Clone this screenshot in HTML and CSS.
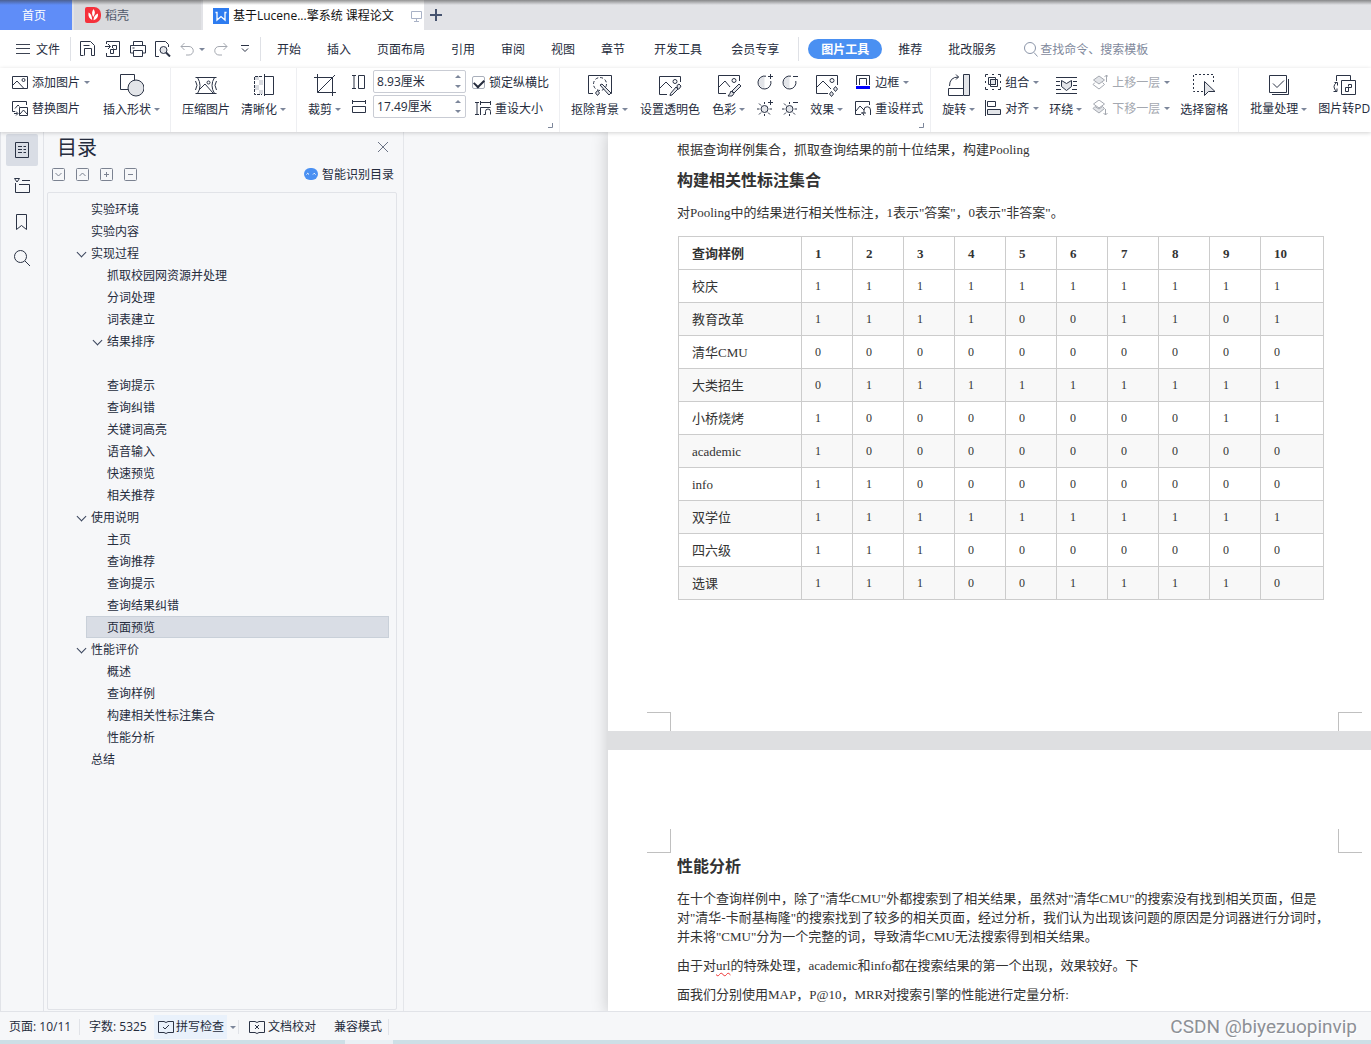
FILE: index.html
```html
<!DOCTYPE html>
<html lang="zh-CN">
<head>
<meta charset="utf-8">
<meta name="viewport" content="width=device-width, initial-scale=1">
<title>基于Lucene...擎系统 课程论文</title>
<link rel="stylesheet" href="styles.css">
</head>
<body>
<div class="app">

<header class="tabbar">
  <button class="tab tab-home" type="button">首页</button>
  <button class="tab tab-docer" type="button">
    <svg width="16" height="16" viewBox="0 0 16 16"><path d="M2 0h7a7 7 0 0 1 7 7v2a7 7 0 0 1-7 7H2a2 2 0 0 1-2-2V2a2 2 0 0 1 2-2z" fill="#f5313b"/><path d="M8.500 2c2 2.500 1.800 5-.3 8C6.500 7 6.800 4.500 8.500 2zM3.500 5.500c2.300 1 3.500 3.300 3.700 7.500C4.300 11.500 3 9.500 3.500 5.500zM13 6.500c.3 3.500-1 5.700-4.500 6.700.2-3.500 1.500-5.500 4.500-6.700z" fill="#fff"/></svg>
    稻壳
  </button>
  <button class="tab tab-doc" type="button">
    <svg width="16" height="16" viewBox="0 0 16 16"><path d="M0 0h16v16H0z" fill="#2e7cf0"/><path d="M2.500 4.500h1.500v7.500L8 8.500l4 3.500V4.500h1.500" fill="none" stroke="#fff" stroke-width="1.300"/></svg>
    <span class="tab-name">基于Lucene...擎系统 课程论文</span>
    <svg width="11" height="12" viewBox="0 0 11 12" fill="none" stroke="#a9b2c6"><path d="M.5 1.500h10v7H.5zM5.500 8.500v3M3 11.500h5"/></svg>
  </button>
  <button class="tab-add" type="button" aria-label="新建"><svg width="12" height="12" viewBox="0 0 12 12"><path d="M6 0v12M0 6h12" stroke="#46536f" stroke-width="2"/></svg></button>
</header>

<nav class="menubar">
  <button class="file-menu" type="button"><svg width="14" height="10" viewBox="0 0 14 10"><path d="M0 .5h14M0 4.500h14M0 9.500h14" stroke="#3c4352"/></svg>文件</button>
  <div class="quick">
    <button type="button" aria-label="保存"><svg class="ic" width="16" height="16" viewBox="0 0 16 16"><path d="M3.500 14.500h-3V.5h10l4 4v10h-3M4.500 14.500v-7h7v7M3.500 4.500h6"/></svg></button>
    <button type="button" aria-label="输出为PDF"><svg class="ic" width="16" height="16" viewBox="0 0 16 16"><path d="M1.500 3V.5h13v15h-13V12M0 5.500h5M3 3l2.500 2.500L3 8M7.500 7V4.500h4v4h-6v4h3v-5"/></svg></button>
    <button type="button" aria-label="打印"><svg class="ic" width="16" height="16" viewBox="0 0 16 16"><path d="M3.500 4V.5h9V4M3.500 12h-3V4.500h15V12h-3M3.500 9.500h9v6h-9zM2.500 7h2"/></svg></button>
    <button type="button" aria-label="打印预览"><svg class="ic" width="16" height="16" viewBox="0 0 16 16"><path d="M4 15.500H.5V.5h10l3 3V6"/><circle class="shade" cx="8.500" cy="9" r="3.500"/><path d="M11 11.500l4 4" stroke-width="2"/></svg></button>
    <button type="button" aria-label="撤销"><svg class="ic faint" width="14" height="14" viewBox="0 0 14 14"><path d="M4.500 1L1 4.500 4.500 8M1 4.500h8a4 4 0 0 1 0 8.500H6"/></svg></button>
    <button type="button" class="undo-more" aria-label="更多撤销"><i class="caret"></i></button>
    <button type="button" aria-label="重做"><svg class="ic faint" width="14" height="14" viewBox="0 0 14 14"><path d="M9.500 1L13 4.500 9.500 8M13 4.500H5a4 4 0 0 0 0 8.500h3"/></svg></button>
    <button type="button" class="quick-more" aria-label="自定义"><svg class="ic" width="8" height="8" viewBox="0 0 8 8"><path d="M0 .5h8M1 3.500l3 3 3-3"/></svg></button>
  </div>
  <div class="menu-tabs">
    <button type="button">开始</button><button type="button">插入</button><button type="button">页面布局</button><button type="button">引用</button><button type="button">审阅</button><button type="button">视图</button><button type="button">章节</button><button type="button" class="far">开发工具</button><button type="button" class="far">会员专享</button>
  </div>
  <div class="context-tabs">
    <button type="button" class="pill">图片工具</button><button type="button">推荐</button><button type="button" class="review">批改服务</button>
  </div>
  <label class="search"><svg width="14" height="15" viewBox="0 0 14 15" fill="none" stroke="#8b95a8"><circle cx="6" cy="6" r="5.500"/><path d="M10 10.500l3.500 4"/></svg><input type="text" placeholder="查找命令、搜索模板" aria-label="查找命令"></label>
</nav>

<section class="ribbon">
  <div class="group g-insert">
    <div class="stack">
      <button type="button" class="small"><svg class="ic" width="16" height="14" viewBox="0 0 16 14"><path d="M.5 1.500h15v12H.5zM1 10l4-4 7 7.500"/><circle cx="11.500" cy="5" r="1.500"/></svg>添加图片<i class="caret"></i></button>
      <button type="button" class="small"><svg class="ic" width="16" height="15" viewBox="0 0 16 15"><path d="M3 10.500H.5V.5h14V4M3 7.500L6 4l1.500 1.500M7.500 14.500v-8h8v8zM8 13l3.500-4 3.500 4M2 12.500h3.500M4 10.500l2 2-2 2"/></svg>替换图片</button>
    </div>
    <button type="button" class="big"><svg class="ic" width="24" height="24" viewBox="0 0 24 24"><path d="M.5 1.500h14v15H.5z"/><circle class="shade" cx="16" cy="15" r="8"/></svg><span>插入形状<i class="caret"></i></span></button>
  </div>

  <div class="group">
    <button type="button" class="big"><svg class="ic" width="24" height="24" viewBox="0 0 24 24"><path d="M1.500 4.500h21M1.500 20.500h21M1.500 8q3 4 0 9M22.500 8q-3 4 0 9M3.500 4.500q5 8 0 16M20.500 4.500q-5 8 0 16M5 17l6-6 8 9"/><circle cx="14.500" cy="9.500" r="1.500"/></svg><span>压缩图片</span></button>
    <button type="button" class="big"><svg class="ic" width="24" height="24" viewBox="0 0 24 24"><path fill="#d9dbe0" stroke="none" d="M3 3h4v4H3zM7 7h4v5H7zM3 12h4v5H3zM7 17h4v4H7z"/><path d="M10 3.500H2.500v18H10" stroke-dasharray="3 1"/><path d="M12.500 1v22M12.500 3.500h9v18h-9"/></svg><span>清晰化<i class="caret"></i></span></button>
  </div>

  <div class="group g-size">
    <button type="button" class="big"><svg class="ic" width="24" height="24" viewBox="0 0 24 24"><path d="M4.500 1v18.500H23M1 4.500h18.500V23M4.500 19.500L22 2"/></svg><span>裁剪<i class="caret"></i></span></button>
    <div class="sizes">
      <div class="size-row">
        <svg class="ic" width="14" height="16" viewBox="0 0 14 16"><path d="M0 1.500h4M0 14.500h4M2 1.500v13M6.500 1.500h6v13h-6z"/></svg>
        <div class="spin"><input type="text" value="8.93厘米" aria-label="高度"><span><button type="button" aria-label="增加高度"><i class="up"></i></button><button type="button" aria-label="减少高度"><i class="down"></i></button></span></div>
      </div>
      <div class="size-row">
        <svg class="ic" width="14" height="16" viewBox="0 0 14 16"><path d="M.5 1v4M13.500 1v4M.5 2.500h13M.5 7.500h13v6H.5z"/></svg>
        <div class="spin"><input type="text" value="17.49厘米" aria-label="宽度"><span><button type="button" aria-label="增加宽度"><i class="up"></i></button><button type="button" aria-label="减少宽度"><i class="down"></i></button></span></div>
      </div>
    </div>
    <div class="stack">
      <label class="small lock"><input type="checkbox" checked>锁定纵横比</label>
      <button type="button" class="small reset-size"><svg class="ic" width="16" height="16" viewBox="0 0 16 16"><path d="M0 2.500h4M0 14.500h4M2 2.500v12M5.500 1v4M15.500 1v4M5.500 2.500h10M5.500 15V7.500h10M8.500 14.500h2v-3a2 2 0 0 1 5 0v3"/></svg>重设大小</button>
    </div>
    <svg class="launcher" width="5" height="5" viewBox="0 0 5 5"><path d="M0 4.500h4.500V0"/></svg>
  </div>

  <div class="group g-style">
    <button type="button" class="big"><svg class="ic" width="24" height="24" viewBox="0 0 24 24"><path d="M5 20.500H.5v-18h23v18H22"/><circle cx="12" cy="11" r="6.500" stroke-dasharray="3 2"/><path class="shade" d="M12 12l2-1 9 9-2 2zM9.500 17.500l2 2.500-2 2.500L7.500 20z"/></svg><span>抠除背景<i class="caret"></i></span></button>
    <button type="button" class="big"><svg class="ic" width="24" height="24" viewBox="0 0 24 24"><path d="M9 21.500H1.500v-18h21V9M2 15l6-6 6 6"/><circle cx="17" cy="8.500" r="2"/><path class="shade" d="M19 12.500l2-1.500 2 2-1.500 2.500-2 1zM18 14l2 2-6 6-2 .5.500-2z"/></svg><span>设置透明色</span></button>
    <button type="button" class="big"><svg class="ic" width="24" height="24" viewBox="0 0 24 24"><path d="M9 20.500H1.500v-18h21V8M2 14l6-6 5 6"/><circle cx="17" cy="7.500" r="2"/><path class="shade" d="M22 11l2 2-7 7-2-2zM14 18l3 2.500-2 2.500h-4q2-2 3-5z"/></svg><span>色彩<i class="caret"></i></span></button>
    <div class="tones">
      <button type="button" aria-label="增加对比度"><svg class="ic" width="16" height="16" viewBox="0 0 16 16"><path fill="#e3e5e9" stroke="none" d="M7.500 2v12a6 6 0 0 1 0-12z"/><path d="M9 2.200a6.500 6.500 0 1 0 4.800 4.800M13.500 0v5M11 2.500h5"/></svg></button>
      <button type="button" aria-label="降低对比度"><svg class="ic" width="16" height="16" viewBox="0 0 16 16"><path fill="#e3e5e9" stroke="none" d="M7.500 2v12a6 6 0 0 1 0-12z"/><path d="M9 2.200a6.500 6.500 0 1 0 4.800 4.800M11 2.500h5"/></svg></button>
      <button type="button" aria-label="增加亮度"><svg class="ic" width="16" height="16" viewBox="0 0 16 16"><circle class="shade" cx="7.500" cy="9" r="3.500"/><path d="M7.500 2v2M7.500 14v2M0 9h2.500M12.500 9H15M2 3.500l2 2M11 12.500l2 2M4 12.500l-2 2M13.500 0v5M11 2.500h5"/></svg></button>
      <button type="button" aria-label="降低亮度"><svg class="ic" width="16" height="16" viewBox="0 0 16 16"><circle class="shade" cx="7.500" cy="9" r="3.500"/><path d="M7.500 2v2M7.500 14v2M0 9h2.500M12.500 9H15M2 3.500l2 2M11 12.500l2 2M4 12.500l-2 2M11 2.500h5"/></svg></button>
    </div>
    <button type="button" class="big"><svg class="ic" width="24" height="24" viewBox="0 0 24 24"><path d="M13 20.500H1.500v-18h21V12M2 14l6-6 8 8"/><circle cx="17" cy="7.500" r="2"/><path class="shade" d="M20.500 13.500l2 2.500-2 2.500-2-2.500zM16.500 18.500l2 2.500-2 2.500-2-2.500z"/></svg><span>效果<i class="caret"></i></span></button>
    <div class="stack">
      <button type="button" class="small"><svg class="ic" width="16" height="16" viewBox="0 0 16 16"><path d="M1.500 11V1.500h13V11M4.500 11V4.500h7V11"/><path d="M1 13.500h14" stroke="#00f" stroke-width="3"/></svg>边框<i class="caret"></i></button>
      <button type="button" class="small"><svg class="ic" width="16" height="16" viewBox="0 0 16 16"><path d="M6 14.500H.5v-13h14V5M1 11l4-5 4 4M9 15.500l-1.500-3M6 13h5M9 13V10a3 3 0 0 1 6.500 0v5"/></svg>重设样式</button>
    </div>
    <svg class="launcher" width="5" height="5" viewBox="0 0 5 5"><path d="M0 4.500h4.500V0"/></svg>
  </div>

  <div class="group g-arrange">
    <button type="button" class="big"><svg class="ic" width="24" height="24" viewBox="0 0 24 24"><path class="shade" d="M16.500 1.500h6v21h-6z"/><path d="M16 22.500H1.500v-7H16M2.500 13q0-9 9-9M9 1.500L11.500 4 9 6.500"/></svg><span>旋转<i class="caret"></i></span></button>
    <div class="stack">
      <button type="button" class="small"><svg class="ic" width="16" height="16" viewBox="0 0 16 16"><path d="M3.500 3.500h7v7h-7zM5.500 5.500h7v7h-7z"/><path class="shade" d="M5.500 5.500h5v5h-5z"/><path d="M.5 3V.5H3M7 .5h2M13 .5h2.500V3M15.500 7v2M15.500 13v2.500H13M9 15.500H7M3 15.500H.5V13M.5 9V7"/></svg>组合<i class="caret"></i></button>
      <button type="button" class="small"><svg class="ic" width="16" height="16" viewBox="0 0 16 16"><path d="M.5 0v16M2.500 1.500h8v5h-8z"/><path class="shade" d="M2.500 9.500h13v5h-13z"/></svg>对齐<i class="caret"></i></button>
    </div>
    <button type="button" class="big"><svg class="ic" width="24" height="24" viewBox="0 0 24 24"><path d="M2 4.500h21M2 8.500h4M19 8.500h4M2 12.500h4M19 12.500h4M2 16.500h5M18 16.500h5M2 20.500h21"/><path class="shade" d="M7.500 7.500l5 3 5-3v6l-5 4-5-4z"/></svg><span>环绕<i class="caret"></i></span></button>
    <div class="stack">
      <button type="button" class="small off" disabled><svg class="ic faint" width="16" height="16" viewBox="0 0 16 16"><path class="shade" d="M7 2l5.500 4L7 10 1.500 6z"/><path d="M3 8.500l-2 2L7 15l5.500-4.500-2-2M14.500 8V1M12.500 3l2-2 2 2"/></svg>上移一层<i class="caret"></i></button>
      <button type="button" class="small off" disabled><svg class="ic faint" width="16" height="16" viewBox="0 0 16 16"><path d="M7 0l5.500 4L7 8 1.500 4z"/><path class="shade" d="M3 6.500l-2 2L7 13l5.500-4.500-2-2L7 9z"/><path d="M13.500 9v6M11.500 13l2 2 2-2"/></svg>下移一层<i class="caret"></i></button>
    </div>
    <button type="button" class="big"><svg class="ic" width="24" height="24" viewBox="0 0 24 24"><path d="M11 18.500H1.500v-17h20V10" stroke-dasharray="2 2"/><path class="shade" d="M12.500 8.500v14l4-4h6.500z"/></svg><span>选择窗格</span></button>
  </div>

  <div class="group g-tools">
    <button type="button" class="big"><svg class="ic" width="24" height="24" viewBox="0 0 24 24"><path d="M2.500 2.500h17v17h-17zM6 10.500l4 4 7-7M5 21.500h16.500V6"/></svg><span>批量处理<i class="caret"></i></span></button>
    <button type="button" class="big"><svg class="ic" width="24" height="24" viewBox="0 0 24 24"><path d="M4.500 8V2.500h14V7M9.500 7.500h14v14h-14z"/><path d="M16.500 13.500v-2h3v3h-6v4h3v-4M4.500 9.500q-5 4 0 9M1.500 18.500h3.500v-3M2.500 9.500h3v3"/></svg><span>图片转PD</span></button>
  </div>
</section>

<main class="work">
  <aside class="rail">
    <button type="button" class="on" aria-label="目录"><svg class="ic" width="16" height="18" viewBox="0 0 16 18"><path d="M1.500 1.500h13v15h-13zM4 5.500h4M9.500 5.500H12M4 8.500h4M9.500 8.500H12M4 11.500h4M9.500 11.500H12"/></svg></button>
    <button type="button" aria-label="章节"><svg class="ic" width="16" height="18" viewBox="0 0 16 18"><path d="M.5 1.500h5L3 5zM8 3.500h8M1.500 6v9.500h14v-8H5"/></svg></button>
    <button type="button" aria-label="书签"><svg class="ic" width="16" height="18" viewBox="0 0 16 18"><path d="M2.500 1.500h10v15l-5-4-5 4z"/></svg></button>
    <button type="button" aria-label="查找"><svg class="ic" width="16" height="18" viewBox="0 0 16 18"><circle cx="6.500" cy="7.500" r="6"/><path d="M11 12l5 5"/></svg></button>
  </aside>

  <aside class="outline">
    <div class="outline-head"><h2>目录</h2><button type="button" aria-label="关闭"><svg width="10" height="10" viewBox="0 0 10 10"><path d="M0 0l10 10M10 0L0 10" stroke="#6b7385"/></svg></button></div>
    <div class="outline-tools">
      <button type="button" aria-label="展开"><svg width="13" height="13" viewBox="0 0 13 13"><rect x=".5" y=".5" width="12" height="12" rx="1"/><path d="M3.500 5l3 3 3-3"/></svg></button>
      <button type="button" aria-label="收起"><svg width="13" height="13" viewBox="0 0 13 13"><rect x=".5" y=".5" width="12" height="12" rx="1"/><path d="M3.500 8l3-3 3 3"/></svg></button>
      <button type="button" aria-label="增加"><svg width="13" height="13" viewBox="0 0 13 13"><rect x=".5" y=".5" width="12" height="12" rx="1"/><path d="M4 6.500h5M6.500 4v5"/></svg></button>
      <button type="button" aria-label="减少"><svg width="13" height="13" viewBox="0 0 13 13"><rect x=".5" y=".5" width="12" height="12" rx="1"/><path d="M4 6.500h5"/></svg></button>
      <button type="button" class="smart"><svg width="14" height="12" viewBox="0 0 14 12"><rect width="14" height="12" rx="6" fill="#4a90f2" stroke="none"/><path d="M2.500 6.500q1.200-2.500 2.500 0M9 6.500q1.200-2.500 2.500 0" stroke="#fff"/></svg>智能识别目录</button>
    </div>
    <ul class="tree">
      <li><i></i>实验环境</li>
      <li><i></i>实验内容</li>
      <li><i class="open"></i>实现过程</li>
      <li class="sub"><i></i>抓取校园网资源并处理</li>
      <li class="sub"><i></i>分词处理</li>
      <li class="sub"><i></i>词表建立</li>
      <li class="sub"><i class="open"></i>结果排序</li>
      <li class="sub"></li>
      <li class="sub"><i></i>查询提示</li>
      <li class="sub"><i></i>查询纠错</li>
      <li class="sub"><i></i>关键词高亮</li>
      <li class="sub"><i></i>语音输入</li>
      <li class="sub"><i></i>快速预览</li>
      <li class="sub"><i></i>相关推荐</li>
      <li><i class="open"></i>使用说明</li>
      <li class="sub"><i></i>主页</li>
      <li class="sub"><i></i>查询推荐</li>
      <li class="sub"><i></i>查询提示</li>
      <li class="sub"><i></i>查询结果纠错</li>
      <li class="sub current"><i></i>页面预览</li>
      <li><i class="open"></i>性能评价</li>
      <li class="sub"><i></i>概述</li>
      <li class="sub"><i></i>查询样例</li>
      <li class="sub"><i></i>构建相关性标注集合</li>
      <li class="sub"><i></i>性能分析</li>
      <li><i></i>总结</li>
    </ul>
  </aside>

  <div class="canvas">
    <div class="sheets">
      <article class="sheet">
        <div class="copy">
          <p>根据查询样例集合，抓取查询结果的前十位结果，构建Pooling</p>
          <h3>构建相关性标注集合</h3>
          <p>对Pooling中的结果进行相关性标注，1表示"答案"，0表示"非答案"。</p>
          <table class="marks">
            <colgroup><col class="c-name"><col class="c-n" span="9"><col></colgroup>
            <thead><tr><th>查询样例</th><th>1</th><th>2</th><th>3</th><th>4</th><th>5</th><th>6</th><th>7</th><th>8</th><th>9</th><th>10</th></tr></thead>
            <tbody>
            <tr><th>校庆</th><td>1</td><td>1</td><td>1</td><td>1</td><td>1</td><td>1</td><td>1</td><td>1</td><td>1</td><td>1</td></tr>
            <tr><th>教育改革</th><td>1</td><td>1</td><td>1</td><td>1</td><td>0</td><td>0</td><td>1</td><td>1</td><td>0</td><td>1</td></tr>
            <tr><th>清华CMU</th><td>0</td><td>0</td><td>0</td><td>0</td><td>0</td><td>0</td><td>0</td><td>0</td><td>0</td><td>0</td></tr>
            <tr><th>大类招生</th><td>0</td><td>1</td><td>1</td><td>1</td><td>1</td><td>1</td><td>1</td><td>1</td><td>1</td><td>1</td></tr>
            <tr><th>小桥烧烤</th><td>1</td><td>0</td><td>0</td><td>0</td><td>0</td><td>0</td><td>0</td><td>0</td><td>1</td><td>1</td></tr>
            <tr><th>academic</th><td>1</td><td>0</td><td>0</td><td>0</td><td>0</td><td>0</td><td>0</td><td>0</td><td>0</td><td>0</td></tr>
            <tr><th>info</th><td>1</td><td>1</td><td>0</td><td>0</td><td>0</td><td>0</td><td>0</td><td>0</td><td>0</td><td>0</td></tr>
            <tr><th>双学位</th><td>1</td><td>1</td><td>1</td><td>1</td><td>1</td><td>1</td><td>1</td><td>1</td><td>1</td><td>1</td></tr>
            <tr><th>四六级</th><td>1</td><td>1</td><td>1</td><td>0</td><td>0</td><td>0</td><td>0</td><td>0</td><td>0</td><td>0</td></tr>
            <tr><th>选课</th><td>1</td><td>1</td><td>1</td><td>0</td><td>0</td><td>1</td><td>1</td><td>1</td><td>1</td><td>0</td></tr>
            </tbody>
          </table>
        </div>
        <div class="crop crop-bottom"><i></i><i></i></div>
      </article>
      <article class="sheet">
        <div class="crop crop-top"><i></i><i></i></div>
        <div class="copy copy-next">
          <h3>性能分析</h3>
          <p>在十个查询样例中，除了"清华CMU"外都搜索到了相关结果，虽然对"清华CMU"的搜索没有找到相关页面，但是<br>对"清华-卡耐基梅隆"的搜索找到了较多的相关页面，经过分析，我们认为出现该问题的原因是分词器进行分词时，<br>并未将"CMU"分为一个完整的词，导致清华CMU无法搜索得到相关结果。</p>
          <p>由于对<span class="typo">url</span>的特殊处理，academic和info都在搜索结果的第一个出现，效果较好。下</p>
          <p>面我们分别使用MAP，P@10，MRR对搜索引擎的性能进行定量分析:</p>
        </div>
      </article>
    </div>
  </div>
</main>

<footer class="status">
  <span class="cell">页面: 10/11</span>
  <span class="words">字数: 5325</span>
  <button type="button" class="spell"><svg class="ic" width="16" height="14" viewBox="0 0 16 14"><path d="M6 1.500H.5v11H6l2 1 2-1h5.500v-11H10l-2 1zM5 7l2 2 4-4"/></svg>拼写检查</button>
  <button type="button" class="spell-more" aria-label="拼写选项"><i class="caret"></i></button>
  <button type="button" class="proof"><svg class="ic" width="16" height="14" viewBox="0 0 16 14"><path d="M6 1.500H.5v11H6l2 1 2-1h5.500v-11H10l-2 1zM6 5l4 4M10 5L6 9"/></svg>文档校对</button>
  <span class="compat">兼容模式</span>
  <span class="credit">CSDN @biyezuopinvip</span>
</footer>
<div class="desktop-edge"><i></i></div>
</div>
</body>
</html>
```

FILE: styles.css
```css
* { box-sizing: border-box; }
body {
  margin: 0;
  font: 12px/16px "Noto Sans CJK SC", sans-serif;
  color: #252c3d;
  background: #fff;
}
button, input {
  font: inherit;
  color: inherit;
  border: 0;
  margin: 0;
  padding: 0;
  background: none;
  white-space: nowrap;
}
svg { display: block; flex: none; }
.tab-name, .spin input, .status, .g-tools { font-family: "Open Sans", "Noto Sans CJK SC", sans-serif; }
.ic { fill: none; stroke: #2b3345; }
.ic .shade { fill: #e3e5e9; }
.ic.faint { stroke: #a4a8b0; }
.caret {
  flex: none;
  border: 3px solid transparent;
  border-top-color: #7c869a;
  border-bottom: 0;
}
.app { display: flex; flex-direction: column; height: 100vh; overflow: hidden; }

/* document tabs */
.tabbar { position: relative; display: flex; flex: none; height: 30px; background: #e2e3e7; }
.tabbar::after {
  content: "";
  position: absolute;
  inset: 0 0 auto;
  height: 5px;
  background: linear-gradient(rgba(60, 60, 60, .55), rgba(60, 60, 60, 0));
  pointer-events: none;
}
.tab { display: flex; align-items: center; }
.tab-home { width: 72px; justify-content: center; background: #5f8df8; color: #fff; margin-right: 2px; padding-right: 4px; }
.tab-docer { width: 127px; gap: 4px; padding-left: 11px; background: #d9dadd; color: #50586a; margin-right: 2px; }
.tab-doc { width: 221px; gap: 4px; padding: 1px 2px 0 10px; background: #fff; color: #111; }
.tab-name { flex: 1; text-align: left; }
.tab-add { display: flex; align-items: center; padding: 0 6px; }

/* menu row */
.menubar { display: flex; flex: none; align-items: center; height: 38px; }
.file-menu { display: flex; align-items: center; gap: 6px; padding-left: 16px; width: 70px; }
.quick {
  display: flex;
  align-items: center;
  gap: 9px;
  height: 24px;
  width: 191px;
  padding-left: 9px;
  border: solid #dfe1e6;
  border-width: 0 1px;
}
.undo-more { display: flex; margin-left: -4px; }
.quick-more { margin-left: 4px; }
.menu-tabs { display: flex; gap: 26px; padding: 0 19px 0 16px; }
.menu-tabs .far { margin-left: 3px; }
.context-tabs { display: flex; align-items: center; gap: 16px; height: 24px; padding-left: 9px; border-left: 1px solid #dfe1e6; }
.pill { height: 20px; width: 74px; border-radius: 10px; background: #4a90f2; color: #fff; font-weight: 700; }
.review { margin-left: 10px; }
.search { display: flex; align-items: center; gap: 2px; margin-left: 28px; }
.search input { width: 140px; outline: 0; }
.search input::placeholder { color: #7f899c; opacity: 1; }

/* ribbon */
.ribbon {
  position: relative;
  z-index: 1;
  display: flex;
  flex: none;
  height: 64px;
  background: #fff;
  box-shadow: 0 1px 4px rgba(0, 0, 0, .18);
}
.group {
  position: relative;
  display: flex;
  flex: none;
  gap: 11px;
  padding: 0 10px 0 11px;
  border-right: 1px solid #eeeff2;
}
.g-insert { gap: 13px; padding-left: 12px; }
.g-style { gap: 12px; padding-right: 7px; }
.g-arrange { gap: 10px; }
.g-tools { border: 0; }
.big { display: flex; flex-direction: column; align-items: center; gap: 4px; padding-top: 5px; }
.big span { display: flex; align-items: center; gap: 3px; }
.stack { display: flex; flex-direction: column; gap: 10px; padding-top: 6px; }
.small { display: flex; align-items: center; gap: 4px; height: 16px; white-space: nowrap; }
.off { color: #a4a8b0; }
.sizes { display: flex; flex-direction: column; gap: 2px; padding-top: 2px; }
.size-row { display: flex; align-items: center; gap: 7px; }
.spin { display: flex; width: 93px; height: 23px; border: 1px solid #c9ccd4; border-radius: 2px; }
.spin input { flex: 1; min-width: 0; padding-left: 3px; outline: 0; }
.spin span { display: flex; flex-direction: column; justify-content: space-evenly; width: 14px; }
.spin button { display: flex; height: 9px; align-items: center; justify-content: center; }
.up, .down { border: 3px solid transparent; }
.up { border-top: 0; border-bottom-color: #7c869a; }
.down { border-bottom: 0; border-top-color: #7c869a; }
.g-size .stack { margin-left: -5px; }
.lock input {
  appearance: none;
  display: flex;
  justify-content: center;
  width: 13px;
  height: 13px;
  padding-top: 2px;
  border: 1px solid #a9afbb;
  border-radius: 2px;
}
.lock input:checked::after {
  content: "";
  width: 8px;
  height: 5px;
  border: solid #252c3d;
  border-width: 0 0 2px 2px;
  transform: rotate(-45deg);
}
.reset-size { padding-left: 3px; }
.launcher { position: absolute; right: 6px; bottom: 4px; fill: none; stroke: #7c869a; }
.tones { display: grid; grid-template-columns: 16px 16px; gap: 10px 9px; align-content: start; padding-top: 6px; }

/* work area */
.work { display: flex; flex: 1; min-height: 0; background: #f6f7f9; }
.rail {
  display: flex;
  flex: none;
  flex-direction: column;
  gap: 4px;
  width: 44px;
  padding: 2px 5px;
  border: solid #e1e3e8;
  border-width: 0 1px;
}
.rail button { display: flex; align-items: center; justify-content: center; width: 32px; height: 32px; border-radius: 2px; }
.rail .on { background: #d9dde5; }
.outline { display: flex; flex: none; flex-direction: column; width: 360px; padding: 0 6px 1px 3px; border-right: 1px solid #e4e6ea; }
.outline-head { display: flex; align-items: center; justify-content: space-between; height: 30px; padding: 0 9px 0 10px; }
.outline-head h2 { margin: 0; font-size: 20px; line-height: 28px; font-weight: 400; }
.outline-tools { display: flex; align-items: center; gap: 11px; height: 24px; padding: 0 3px 0 5px; margin-bottom: 6px; fill: none; stroke: #7b8291; }
.smart { display: flex; align-items: center; gap: 4px; margin-left: auto; }
.tree {
  flex: 1;
  min-height: 0;
  margin: 0;
  padding: 5px 7px 0 28px;
  list-style: none;
  border: 1px solid #e1e3e8;
  border-radius: 2px;
}
.tree li { display: flex; align-items: center; gap: 5px; height: 22px; }
.tree i { display: flex; justify-content: center; width: 10px; }
.tree .open::before {
  content: "";
  width: 6px;
  height: 6px;
  margin-bottom: 2px;
  border: solid #39445c;
  border-width: 0 1px 1px 0;
  transform: rotate(45deg);
}
.tree .sub { margin-left: 10px; padding-left: 6px; }
.tree .current { background: #d9dde5; box-shadow: inset 0 0 0 1px #c9d0d9; }

/* pages */
.canvas { flex: 1; min-width: 0; padding-left: 204px; overflow: hidden; }
.sheets { display: flex; flex-direction: column; gap: 19px; background: #dedfe1; box-shadow: 0 0 16px rgba(0, 0, 0, .2); }
.sheet {
  background: #fff;
  color: #333;
  font: 13px/19px "Liberation Serif", "Noto Sans CJK SC", serif;
}
.copy { padding: 8px 47px 0 69px; }
.copy-next { padding-top: 2px; }
.copy p { margin: 0 0 10px; white-space: nowrap; }
.copy h3 { margin: 0 0 10px; font-size: 16px; line-height: 24px; }
.marks { width: calc(100% - 1px); margin: 14px 0 0 1px; border-collapse: collapse; table-layout: fixed; }
.c-name { width: 123px; }
.c-n { width: 51px; }
.marks tr { height: 33px; }
.marks th, .marks td { padding: 0 0 0 13px; border: 1px solid #ccc; text-align: left; }
.marks tbody th { font-weight: 400; }
.marks td { font-size: 12px; }
.marks tbody tr:nth-child(2n) { background: #f8f8f8; }
.typo { text-decoration: underline wavy #e33 1px; text-underline-offset: 2px; }
.crop { display: flex; justify-content: space-between; padding: 0 9px 0 39px; }
.crop i { width: 24px; border: 0 solid #c0c0c0; }
.crop i:first-child { border-right-width: 1px; }
.crop i:last-child { border-left-width: 1px; }
.crop-bottom { padding-top: 112px; }
.crop-bottom i { height: 19px; border-top-width: 1px; }
.crop-top { padding-top: 79px; }
.crop-top i { height: 24px; border-bottom-width: 1px; }

/* status bar */
.status { display: flex; flex: none; align-items: center; height: 29px; padding: 2px 14px 0 9px; background: #f6f7f9; border-top: 1px solid #e1e3e8; white-space: nowrap; }
.cell { width: 71px; border-right: 1px solid #e1e3e8; }
.words { width: 65px; margin-left: 9px; }
.spell, .proof { display: flex; align-items: center; gap: 2px; height: 24px; }
.spell { width: 73px; padding-left: 4px; background: #e9f1fb; }
.spell-more { display: flex; align-items: center; justify-content: center; width: 12px; height: 14px; border-right: 1px solid #e1e3e8; }
.proof { gap: 3px; margin-left: 10px; }
.compat { margin-left: 18px; padding-right: 6px; border-right: 1px solid #e1e3e8; }
.credit { margin-left: auto; font: 19px/24px Roboto, sans-serif; color: #8d9096; text-shadow: 1px 1px 0 #fff; }
.desktop-edge { flex: none; display: flex; height: 4px; padding-left: 345px; background: #cddfe6; }
.desktop-edge i { width: 48px; background: #eaf0f5; }
```
